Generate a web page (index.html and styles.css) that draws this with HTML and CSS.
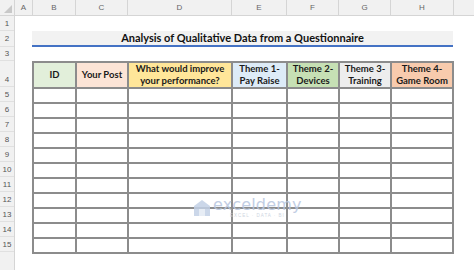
FILE: index.html
```html
<!DOCTYPE html>
<html>
<head>
<meta charset="utf-8">
<link rel="stylesheet" href="styles.css">
</head>
<body>
<div class="app">
  <div class="colhdr">
    <div class="corner"><svg width="8" height="8" viewBox="0 0 8 8"><polygon points="8,0 8,8 0,8" fill="#c8c8c8"/></svg></div>
    <div class="ch w-a">A</div>
    <div class="ch w-b">B</div>
    <div class="ch w-c">C</div>
    <div class="ch w-d">D</div>
    <div class="ch w-e">E</div>
    <div class="ch w-f">F</div>
    <div class="ch w-g">G</div>
    <div class="ch w-h">H</div>
    <div class="ch w-i"></div>
  </div>
  <div class="body">
    <div class="rowhdr">
      <div class="rh r-1">1</div>
      <div class="rh r-2">2</div>
      <div class="rh r-3">3</div>
      <div class="rh r-4">4</div>
      <div class="rh">5</div>
      <div class="rh">6</div>
      <div class="rh">7</div>
      <div class="rh">8</div>
      <div class="rh">9</div>
      <div class="rh">10</div>
      <div class="rh">11</div>
      <div class="rh">12</div>
      <div class="rh">13</div>
      <div class="rh">14</div>
      <div class="rh">15</div>
      <div class="rh rh-rest"></div>
    </div>
    <div class="sheet">
      <div class="row-1"></div>
      <div class="title">Analysis of Qualitative Data from a Questionnaire</div>
      <div class="row-3"></div>
      <table class="data">
        <colgroup>
          <col class="c-b"><col class="c-c"><col class="c-d"><col class="c-e"><col class="c-f"><col class="c-g"><col class="c-h">
        </colgroup>
        <thead>
          <tr>
            <th class="h-id">ID</th>
            <th class="h-post">Your Post</th>
            <th class="h-imp">What would improve<br>your performance?</th>
            <th class="h-t1">Theme 1-<br>Pay Raise</th>
            <th class="h-t2">Theme 2-<br>Devices</th>
            <th class="h-t3">Theme 3-<br>Training</th>
            <th class="h-t4">Theme 4-<br>Game Room</th>
          </tr>
        </thead>
        <tbody>
          <tr><td></td><td></td><td></td><td></td><td></td><td></td><td></td></tr>
          <tr><td></td><td></td><td></td><td></td><td></td><td></td><td></td></tr>
          <tr><td></td><td></td><td></td><td></td><td></td><td></td><td></td></tr>
          <tr><td></td><td></td><td></td><td></td><td></td><td></td><td></td></tr>
          <tr><td></td><td></td><td></td><td></td><td></td><td></td><td></td></tr>
          <tr><td></td><td></td><td></td><td></td><td></td><td></td><td></td></tr>
          <tr><td></td><td></td><td></td><td></td><td></td><td></td><td></td></tr>
          <tr><td></td><td></td><td></td><td></td><td></td><td></td><td></td></tr>
          <tr><td></td><td></td><td></td><td></td><td></td><td></td><td></td></tr>
          <tr><td></td><td></td><td></td><td></td><td></td><td></td><td></td></tr>
          <tr><td></td><td></td><td></td><td></td><td></td><td></td><td></td></tr>
        </tbody>
      </table>
      <div class="watermark">
        <svg class="wm-logo" width="18" height="18" viewBox="0 0 18 18">
          <polygon points="9,1 17,7 17,17 1,17 1,7" fill="#c3d1e6"/>
          <rect x="6" y="10" width="6" height="7" fill="#e3eaf4"/>
        </svg>
        <div class="wm-text">
          <div class="wm-name">exceldemy</div>
          <div class="wm-sub">EXCEL · DATA · BI</div>
        </div>
      </div>
    </div>
  </div>
</div>
</body>
</html>
```
FILE: styles.css
```css
* { box-sizing: border-box; }
html, body { margin: 0; padding: 0; background: #ffffff; }
body { width: 474px; height: 270px; overflow: hidden; font-family: "Lato", "Liberation Sans", sans-serif; }
.app { width: 474px; height: 270px; display: flex; flex-direction: column; }

.colhdr { display: flex; height: 16px; background: #f1f1f1; border-bottom: 1px solid #d5d5d5; }
.corner { width: 15px; display: flex; align-items: flex-end; justify-content: flex-end; padding: 0 2px 2px 0; border-right: 1px solid #d5d5d5; }
.ch { display: flex; align-items: center; justify-content: center; font-size: 8px; color: #666; border-right: 1px solid #d5d5d5; font-family: "Liberation Sans", sans-serif; }
.w-a { width: 18px; }
.w-b { width: 43px; }
.w-c { width: 52px; }
.w-d { width: 104px; }
.w-e { width: 55px; }
.w-f { width: 52px; }
.w-g { width: 52px; }
.w-h { width: 63px; }
.w-i { flex: 1; border-right: none; }

.body { display: flex; flex: 1; }
.rowhdr { width: 15px; background: #f1f1f1; border-right: 1px solid #d5d5d5; display: flex; flex-direction: column; }
.rh { height: 15px; display: flex; align-items: center; justify-content: center; font-size: 8px; color: #555; border-bottom: 1px solid #e0e0e0; font-family: "Liberation Sans", sans-serif; }
.r-1 { height: 15px; }
.r-2 { height: 16px; }
.r-3 { height: 14px; }
.r-4 { height: 26px; align-items: flex-end; padding-bottom: 2px; }
.rh-rest { flex: 1; border-bottom: none; }

.sheet { position: relative; padding-left: 17px; }
.row-1 { height: 15px; }
.title { width: 421px; height: 16px; background: #f2f2f2; border-bottom: 2px solid #4472c4; font-weight: 700; font-size: 11px; color: #111; text-align: center; line-height: 14px; }
.row-3 { height: 14px; }

.data { border-collapse: separate; border-spacing: 2px; table-layout: fixed; width: 422px; background: #8c8c8c; }
.c-b { width: 41px; }
.c-c { width: 50px; }
.c-d { width: 102px; }
.c-e { width: 53px; }
.c-f { width: 50px; }
.c-g { width: 50px; }
.c-h { width: 60px; }
.data th, .data td { padding: 0; background: #ffffff; }
.data th { height: 24px; font-size: 9.5px; font-weight: 700; color: #1a1a1a; line-height: 12px; text-align: center; }
.data td { height: 13px; }
.data th.h-id { background: #e2efda; }
.data th.h-post { background: #fce4d6; }
.data th.h-imp { background: #ffe699; }
.data th.h-t1 { background: #ddebf7; }
.data th.h-t2 { background: #c6e0b4; }
.data th.h-t3 { background: #ededed; }
.data th.h-t4 { background: #f8cbad; }

.watermark { position: absolute; left: 178px; top: 181px; display: flex; align-items: center; gap: 2px; opacity: 0.85; }
.wm-name { font-family: "DejaVu Sans", sans-serif; font-size: 16px; color: #b7c6df; line-height: 16px; letter-spacing: 0.2px; }
.wm-sub { font-family: "Liberation Sans", sans-serif; font-size: 4.5px; color: #c7cfdb; letter-spacing: 1px; text-align: center; }
```
